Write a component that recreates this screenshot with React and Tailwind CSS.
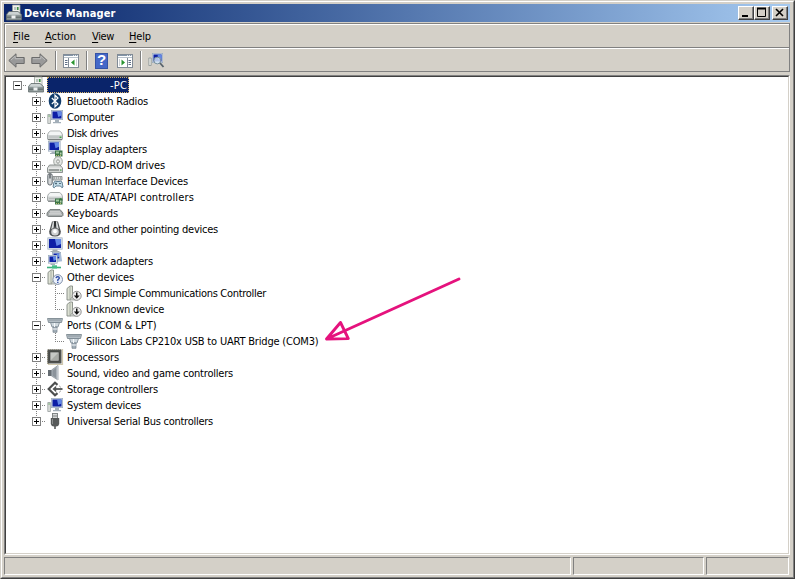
import { useLayoutEffect, useRef } from 'react';

// Text that spreads its letter spacing to fill a given advance width.
function Fit({ w, children }) {
  const ref = useRef(null);
  useLayoutEffect(() => {
    const el = ref.current;
    el.style.letterSpacing = '0px';
    const n = el.textContent.length;
    const natural = el.getBoundingClientRect().width;
    el.style.letterSpacing = `${(w - natural) / n}px`;
  }, [w]);
  return <span ref={ref} className="inline-block whitespace-pre">{children}</span>;
}

const Svg = ({ children, w = 16, h = 16 }) => (
  <svg width={w} height={h} viewBox={`0 0 ${w} ${h}`} className="block shrink-0 overflow-visible">{children}</svg>
);

const Screen = ({ x, y, w, h }) => (
  <>
    <rect x={x} y={y} width={w} height={h} fill="#8fa0b4" />
    <rect x={x + 0.5} y={y + 0.5} width={w - 1} height={h - 1} fill="#cbd6e2" />
    <rect x={x + 1.5} y={y + 1.5} width={w - 3} height={h - 3} fill="#0d1fa6" />
    <path d={`M${x + w * 0.5} ${y + 1.5}H${x + w - 1.5}V${y + h * 0.55}L${x + w * 0.6} ${y + h * 0.7}Z`} fill="#6288e6" />
  </>
);

const Drive = ({ y = 6 }) => (
  <>
    <path d={`M3.5 ${y}H12.5Q15 ${y + 1} 15.5 ${y + 4}V${y + 8}L14.5 ${y + 9}H1.5L.5 ${y + 8}V${y + 4}Q1 ${y + 1} 3.5 ${y}Z`} fill="#cdd1d1" stroke="#979c9c" strokeWidth=".8" />
    <path d={`M3.5 ${y + 0.6}H12.5Q14.4 ${y + 1.5} 14.8 ${y + 4}H1.2Q1.6 ${y + 1.5} 3.5 ${y + 0.6}Z`} fill="#f3f5f5" />
    <path d={`M1 ${y + 8.6}H15`} stroke="#6e7474" strokeWidth=".9" />
    <path d={`M2 ${y + 6}H12`} stroke="#b5baba" />
    <rect x="12.5" y={y + 5.5} width="2" height="1.5" fill="#45a548" />
  </>
);

const Card = () => (
  <>
    <rect x="8" y="9.5" width="7.5" height="6" fill="#3d7548" />
    <rect x="9" y="10.5" width="3" height="2" fill="#9fc89e" />
    <rect x="13" y="11.5" width="1.5" height="2" fill="#b9d4b0" />
    <path d="M9 14.5H15" stroke="#b8bd70" strokeDasharray="1 1" />
  </>
);

const Computer = () => (
  <>
    <path d="M.8 5.5H3.4V14.5H.8Z" fill="#dfe2df" stroke="#979e9e" strokeWidth=".8" />
    <path d="M1.4 7H2.8" stroke="#5aa45a" />
    <Screen x={4} y={1} w={12} h={10} />
    <path d="M8 11H12V13H14V14.3H6V13H8Z" fill="#a3afb9" />
  </>
);

const Tower = () => (
  <>
    <path d="M1 3.5L4 1H6.5V13L4.5 15H1Z" fill="#dde1d4" stroke="#858b83" strokeWidth=".9" />
    <path d="M4 2V14" stroke="#9ba198" strokeWidth=".8" />
    <path d="M5 13L9 10H13L12 15H4Z" fill="#d1d5cf" stroke="#8e948c" strokeWidth=".7" />
  </>
);

const Plug = () => (
  <>
    <path d="M.5 1.5H15.5L14.5 5.5H1.5Z" fill="#b4bec5" stroke="#7d8991" strokeWidth=".9" />
    <path d="M2.5 3H13.5" stroke="#64717b" strokeDasharray="1 1" />
    <path d="M3.5 5.5H12.5L11 10H5Z" fill="#cfd8de" stroke="#75838e" strokeWidth=".8" />
    <path d="M6 10H10V15.3H6Z" fill="#a3b0ba" stroke="#74808a" strokeWidth=".7" />
    <path d="M6 12H10M7.5 6V10" stroke="#f5f8fa" />
  </>
);

const RootIcon = () => (
  <>
    <path d="M6.5 0H14V9H6.5Z" fill="#f2f3ee" stroke="#99a19b" strokeWidth=".8" />
    <path d="M8 2H10.5V5H8Z" fill="#b8c4c0" />
    <rect x="11" y="2" width="1.6" height="3" fill="#3f8f45" />
    <path d="M3 6.5H12L15.5 9.5V15H.5V9.5Z" fill="#8b9696" stroke="#667070" strokeWidth=".8" />
    <path d="M3 7H12L14.8 9.7H1.2Z" fill="#ccd3d3" />
    <path d="M1 12.2H15" stroke="#5b6565" />
    <rect x="5.5" y="10.5" width="4" height="3" fill="#eef1f1" />
  </>
);

const icons = {
  root: <RootIcon />,
  bluetooth: (
    <>
      <ellipse cx="8" cy="8" rx="6.3" ry="7.7" fill="#123d6c" />
      <path d="M4.8 5L11 11L8 13.8V2.2L11 5L4.8 11" fill="none" stroke="#fff" strokeWidth="1.2" />
    </>
  ),
  computer: <Computer />,
  disk: <Drive y={6} />,
  display: (
    <>
      <Screen x={1} y={0} w={12.5} h={10.5} />
      <path d="M4.5 10.5H8V13H3V12H4.5Z" fill="#a3afb9" />
      <Card />
    </>
  ),
  dvd: (
    <>
      <ellipse cx="11" cy="4.5" rx="4.3" ry="4.8" fill="#e3e6e3" stroke="#969c96" strokeWidth=".9" />
      <ellipse cx="11" cy="4.5" rx="1.3" ry="1.8" fill="#fff" stroke="#7c827c" strokeWidth=".8" />
      <path d="M2.5 8H13L15.5 11V15.5H.5V11Z" fill="#d0d3d1" stroke="#777d7b" strokeWidth=".8" />
      <path d="M1 11.2H15" stroke="#f4f5f4" />
      <path d="M2 13H12" stroke="#5f6664" />
      <rect x="13" y="12.5" width="1.5" height="1.2" fill="#45a548" />
    </>
  ),
  hid: (
    <>
      <rect x=".8" y=".5" width="4.4" height="11.5" rx="2" fill="#d4d7d9" stroke="#5f676c" strokeWidth="1" />
      <path d="M3 1V5.5" stroke="#3d454a" strokeWidth="1.2" />
      <path d="M6 3.5H15V7H6Z" fill="#d1d4d4" stroke="#7d8383" strokeWidth=".8" />
      <path d="M7 5H14" stroke="#7d8383" strokeDasharray="1 1" />
      <path d="M7 9Q8 7.6 10 8.5H12Q14 7.6 15 9L16 14Q15 16 13.5 13H9Q7 16 6 14Z" fill="#c3dce8" stroke="#55758a" strokeWidth=".9" />
      <path d="M8 10.5H10M9 9.5V11.5M12 10.5H14" stroke="#3f5968" strokeWidth=".8" />
    </>
  ),
  ide: (
    <>
      <Drive y={3.5} />
      <Card />
    </>
  ),
  keyboard: (
    <>
      <path d="M3 4.5H13L16 8V10.5Q15.5 11.5 14 11.5H2Q.5 11.5 0 10.5V8Z" fill="#a5aaaa" stroke="#686e6e" strokeWidth=".8" />
      <path d="M3.5 6.5H13M2.5 8.5H14" stroke="#f0f1f1" strokeDasharray="1 1" />
      <path d="M2.5 7.5H14M1.5 9.5H15" stroke="#dfe1e1" strokeDasharray="1 1" strokeDashoffset="1" />
    </>
  ),
  mouse: (
    <>
      <path d="M5 .5H11L13.8 10.5Q14 15.5 8 15.5Q2 15.5 2.2 10.5Z" fill="#505355" />
      <path d="M5.8 1H7L6.7 6.5L4.2 8.5ZM10.2 1H9L9.3 6.5L11.8 8.5Z" fill="#d8dadb" />
      <ellipse cx="8" cy="11" rx="3.8" ry="3.5" fill="#cfd1d2" />
      <path d="M8 0V5.5" stroke="#202325" strokeWidth="1.5" />
      <ellipse cx="8" cy="10.3" rx="1.8" ry="2" fill="#fff" />
    </>
  ),
  monitor: (
    <>
      <Screen x={0.5} y={0.5} w={15} h={12} />
      <path d="M5.5 12.5H10.5V14H12.5V15H3.5V14H5.5Z" fill="#a4acb4" />
    </>
  ),
  network: (
    <>
      <Screen x={5} y={-1} w={9} h={8} />
      <path d="M10 8L14 7.5L13 1" fill="none" stroke="#a9bdd8" strokeWidth="2" />
      <Screen x={1} y={2} w={9.5} h={8.5} />
      <path d="M3.5 10.5H8V12H3.5Z" fill="#a4b0bc" />
      <path d="M0 14.5H14" stroke="#3caf7d" strokeWidth="1.6" />
      <rect x="5" y="12.3" width="5" height="3.2" fill="#46be87" />
    </>
  ),
  other: (
    <>
      <Tower />
      <circle cx="10.7" cy="10.5" r="4.8" fill="#eaf0fa" stroke="#7687a3" strokeWidth=".9" />
      <path d="M9 9.2Q9.2 7.7 10.8 7.7Q12.4 7.8 12.3 9.2Q12.2 10 10.8 10.8V12M10.8 12.8V13.9" fill="none" stroke="#2443a1" strokeWidth="1.3" />
    </>
  ),
  unknown: (
    <>
      <Tower />
      <circle cx="10.7" cy="10.8" r="4.5" fill="#ededed" stroke="#858585" strokeWidth=".9" />
      <path d="M10 7.5H11.5V10.5H13.7L10.75 13.8L7.8 10.5H10Z" fill="#111" />
    </>
  ),
  port: <Plug />,
  cpu: (
    <>
      <rect x="1" y="1" width="14.5" height="14.5" fill="none" stroke="#a1925e" strokeWidth="1.2" strokeDasharray="1 1" />
      <rect x=".5" y=".5" width="14" height="14" fill="#50524f" />
      <rect x="3" y="3" width="9" height="9" fill="#c6c8c5" stroke="#363836" strokeWidth=".6" />
      <path d="M4 11L11 4V11Z" fill="#a9aba7" />
    </>
  ),
  sound: (
    <>
      <rect x="1" y="5" width="4" height="6" fill="#656c72" />
      <path d="M4.5 5L11 .5V15L4.5 11Z" fill="#aab2b9" stroke="#889098" strokeWidth=".7" />
      <path d="M9 3V13L5.5 10.5V5.5Z" fill="#8b939b" />
      <path d="M10.8 1V15" stroke="#d0d5da" />
    </>
  ),
  storage: (
    <>
      <path d="M10.5 3.8L8 1.7L1.7 8L8 14.3L10.5 12.2" fill="none" stroke="#4d4f4f" strokeWidth="2.2" />
      <path d="M8 8H15.5" stroke="#525454" strokeWidth="1.8" />
      <path d="M5.5 8L9.2 4.8V11.2Z" fill="#525454" />
      <path d="M12 4.7L14 6.5M12 11.5L14 9.7" stroke="#a1a3a3" />
    </>
  ),
  usb: (
    <>
      <rect x="5.5" y=".5" width="5" height="5" fill="#d7d9d9" stroke="#777b7b" strokeWidth=".9" />
      <path d="M7 2V4M9 2V4" stroke="#808484" />
      <path d="M3.8 5H12.2V11Q11.7 13.5 9 13.5H7Q4.3 13.5 3.8 11Z" fill="#565959" />
      <path d="M5.5 6V11" stroke="#8b8e8e" />
      <path d="M8 13V16" stroke="#555858" strokeWidth="1.6" />
    </>
  ),
};
icons.system = icons.computer;

const rows = [
  ['bluetooth', 'Bluetooth Radios', 81, '+'],
  ['computer', 'Computer', 47, '+'],
  ['disk', 'Disk drives', 51, '+'],
  ['display', 'Display adapters', 80, '+'],
  ['dvd', 'DVD/CD-ROM drives', 98, '+'],
  ['hid', 'Human Interface Devices', 121, '+'],
  ['ide', 'IDE ATA/ATAPI controllers', 127, '+'],
  ['keyboard', 'Keyboards', 51, '+'],
  ['mouse', 'Mice and other pointing devices', 151, '+'],
  ['monitor', 'Monitors', 41, '+'],
  ['network', 'Network adapters', 86, '+'],
  ['other', 'Other devices', 67, '-'],
  ['unknown', 'PCI Simple Communications Controller', 180, 'mid'],
  ['unknown', 'Unknown device', 78, 'end'],
  ['port', 'Ports (COM & LPT)', 89.5, '-'],
  ['port', 'Silicon Labs CP210x USB to UART Bridge (COM3)', 232.5, 'end'],
  ['cpu', 'Processors', 52, '+'],
  ['sound', 'Sound, video and game controllers', 166, '+'],
  ['storage', 'Storage controllers', 91, '+'],
  ['system', 'System devices', 74, '+'],
  ['usb', 'Universal Serial Bus controllers', 146, '+'],
];

// One 19px indent column: dotted guides with an optional expander box.
const vLine = 'absolute left-[9px] h-2 w-px bg-[repeating-linear-gradient(to_bottom,#808080_0_1px,transparent_1px_2px)]';
const hLine = 'absolute left-[9px] top-2 h-px w-[10px] bg-[repeating-linear-gradient(to_right,#808080_0_1px,transparent_1px_2px)]';

function Gutter({ sign, up = true, down = true, across = true }) {
  return (
    <div className="relative h-4 w-[19px] shrink-0">
      {up && <div className={`${vLine} top-0`} />}
      {down && <div className={`${vLine} top-2`} />}
      {across && <div className={hLine} />}
      {sign && (
        <div className="absolute left-[5px] top-1 size-[9px] border border-[#808080] bg-white">
          <div className="absolute left-px top-[3px] h-px w-[5px] bg-black" />
          {sign === '+' && <div className="absolute left-[3px] top-px h-[5px] w-px bg-black" />}
        </div>
      )}
    </div>
  );
}

function Row({ icon, label, w, kind, last }) {
  const nested = kind === 'mid' || kind === 'end';
  return (
    <div className="flex h-4 items-center pl-[21px]">
      <Gutter sign={nested ? null : kind} across={!nested} down={!last} />
      {nested && <Gutter down={kind === 'mid'} />}
      <div className="ml-px"><Svg>{icons[icon]}</Svg></div>
      <div className="ml-1 h-4 pt-px leading-4"><Fit w={w}>{label}</Fit></div>
    </div>
  );
}

const MenuItem = ({ label, w }) => (
  <Fit w={w}><span className="underline decoration-1 underline-offset-2">{label[0]}</span>{label.slice(1)}</Fit>
);

const Arrow = ({ flip }) => (
  <Svg w={17} h={15}>
    <g transform={flip ? 'translate(17 0) scale(-1 1)' : undefined}>
      <path d="M.8 7.5L8 .8V4.5H16.2V10.5H8V14.2Z" fill="#999" stroke="#6b6b6b" strokeLinejoin="round" />
      <path d="M3 7L7.2 3.2V5.7H15" fill="none" stroke="#bdbdbd" />
    </g>
  </Svg>
);

const Pane = ({ right }) => (
  <Svg w={16} h={14}>
    <rect x=".5" y=".5" width="15" height="13" fill="#fff" stroke="#818b96" />
    <path d="M1 1.5H15" stroke="#8295a8" />
    <path d="M1 3.5H15" stroke="#b9c3cc" />
    <path d="M10 1.5H15" stroke="#dce3ea" strokeDasharray="1 1" />
    <g transform={right ? 'translate(16 0) scale(-1 1)' : undefined}>
      <path d="M5.5 4V13" stroke="#818b96" />
      <path d="M2 6.5H4.5M2 8.5H4.5M2 10.5H4.5" stroke="#5f6f85" />
      <path d="M13.5 5V12" stroke="#cbd0d4" />
    </g>
    <path d={right ? 'M4.5 5.5V11.5L8 8.5Z' : 'M11.5 5.5V11.5L8 8.5Z'} fill="#29942f" />
  </Svg>
);

const Sep = () => <div className="h-[19px] w-[2px] border-l border-[#808080] border-r border-r-white" />;

const WinButton = ({ children }) => (
  <div className="h-[14px] w-4 border border-t-white border-l-white border-r-[#404040] border-b-[#404040] bg-[#d4d0c8]">
    <div className="h-3 w-[14px] border-r border-b border-[#808080]">
      <Svg w={13} h={11}>{children}</Svg>
    </div>
  </div>
);

const StatusPane = ({ className }) => (
  <div className={`h-[18px] border border-t-[#808080] border-l-[#808080] border-r-white border-b-white ${className}`} />
);

export default function App() {
  return (
    <div className="relative flex h-[579px] w-[795px] flex-col overflow-hidden border border-t-[#d4d0c8] border-l-[#d4d0c8] border-r-[#404040] border-b-[#404040] bg-[#d4d0c8] font-['DejaVu_Sans_Condensed','DejaVu_Sans',sans-serif] text-[11px] font-stretch-condensed text-black">
      <div className="flex grow flex-col border border-t-white border-l-white border-r-[#808080] border-b-[#808080] p-[2px]">
        <div className="flex h-[18px] w-[786px] shrink-0 items-center bg-linear-to-r from-[#0a246a] to-[#a6caf0] pl-[2px] pr-[2px]">
          <Svg>{icons.root}</Svg>
          <div className="ml-[2px] grow pt-px font-bold leading-[17px] text-white"><Fit w={91.5}>Device Manager</Fit></div>
          <WinButton><path d="M3 9H9" stroke="#000" strokeWidth="2" /></WinButton>
          <WinButton><path d="M2.5 1V9.5H10.5V1" fill="none" stroke="#000" /><path d="M2 1.5H11" stroke="#000" strokeWidth="2" /></WinButton>
          <div className="ml-[2px]">
            <WinButton><path d="M3 2L10 9M10 2L3 9" stroke="#000" strokeWidth="1.6" /></WinButton>
          </div>
        </div>
        <div className="mt-px h-[49px] w-[786px] shrink-0 border border-[#808080]">
          <div className="flex h-[23px] items-center border-t border-l border-white pl-[7px] pt-[2px]">
            <div className="w-8"><MenuItem label="File" w={17} /></div>
            <div className="w-[47px]"><MenuItem label="Action" w={31} /></div>
            <div className="w-[37px]"><MenuItem label="View" w={22} /></div>
            <MenuItem label="Help" w={22} />
          </div>
          <div className="h-px bg-[#808080]" />
          <div className="flex h-[23px] items-center border-t border-l border-white pl-[2px] pt-px">
            <Arrow />
            <div className="ml-[6px]"><Arrow flip /></div>
            <div className="ml-[7px]"><Sep /></div>
            <div className="ml-[6px]"><Pane /></div>
            <div className="ml-[7px]"><Sep /></div>
            <div className="ml-[7px] flex h-4 w-[13px] items-center justify-center border border-[#3453a6] bg-[#4468c8] font-['Liberation_Sans',sans-serif] text-[15px] font-bold text-white">?</div>
            <div className="ml-[9px]"><Pane right /></div>
            <div className="ml-[7px]"><Sep /></div>
            <div className="ml-[6px]">
              <Svg>
                <path d="M.8 5H3.2V12.5H.8Z" fill="#e5e7e2" stroke="#8e9696" strokeWidth=".8" />
                <Screen x={4} y={0} w={11} h={10} />
                <circle cx="9.3" cy="7.5" r="3.4" fill="#dcecf6" fillOpacity=".8" stroke="#78909d" />
                <path d="M12 10L15.5 14" stroke="#58636c" strokeWidth="1.8" />
              </Svg>
            </div>
          </div>
        </div>
        <div className="mt-[3px] flex h-[480px] w-[786px] shrink-0 flex-col border border-t-[#808080] border-l-[#808080] border-r-white border-b-white">
          <div className="grow border border-t-[#404040] border-l-[#404040] border-r-[#d4d0c8] border-b-[#d4d0c8] bg-white">
            <div className="flex h-4 items-center pl-[2px]">
              <Gutter sign="-" up={false} down={false} />
              <div className="ml-px"><Svg>{icons.root}</Svg></div>
              <div className="ml-[3px] flex h-4 w-[82px] justify-end border border-dotted border-[#d6b26a] bg-[#0a246a] pr-px leading-4 text-white"><Fit w={17}>-PC</Fit></div>
            </div>
            {rows.map(([icon, label, w, kind], i) => (
              <Row key={label} icon={icon} label={label} w={w} kind={kind} last={i === rows.length - 1} />
            ))}
          </div>
        </div>
        <div className="mt-[2px] flex gap-[2px]">
          <StatusPane className="w-[567px]" />
          <StatusPane className="w-[131px]" />
          <StatusPane className="w-[83px]" />
        </div>
      </div>
      <svg className="absolute left-[320px] top-[270px]" width="145" height="75" viewBox="321 271 145 75">
        <path d="M459 279L326.5 339M340.5 322.5L326.5 339L348.3 338.6L340.5 322.5" fill="none" stroke="#e5127d" strokeWidth="2.9" strokeLinecap="round" strokeLinejoin="round" />
      </svg>
    </div>
  );
}
